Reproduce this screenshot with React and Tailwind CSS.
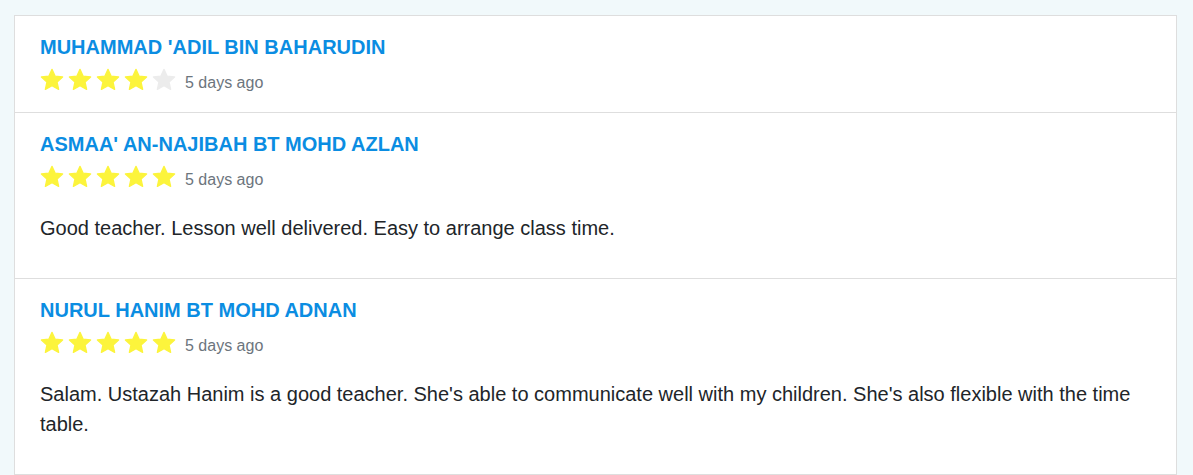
import React from "react";

const reviews = [
  { name: "MUHAMMAD 'ADIL BIN BAHARUDIN", stars: 4, when: "5 days ago", text: null },
  { name: "ASMAA' AN-NAJIBAH BT MOHD AZLAN", stars: 5, when: "5 days ago", text: "Good teacher. Lesson well delivered. Easy to arrange class time." },
  { name: "NURUL HANIM BT MOHD ADNAN", stars: 5, when: "5 days ago", text: "Salam. Ustazah Hanim is a good teacher. She's able to communicate well with my children. She's also flexible with the time table." },
];

function Star({ on }) {
  return (
    <svg width="26" height="26" viewBox="0 0 24 24" className="block">
      <path
        d="M12 2.2l2.95 6.3 6.85.75-5.1 4.65 1.43 6.8L12 17.2l-6.13 3.5 1.43-6.8-5.1-4.65 6.85-.75z"
        fill={on ? "#fcf43c" : "#ececec"}
        stroke={on ? "#fcf43c" : "#ececec"}
        strokeWidth="1.2"
        strokeLinejoin="round"
      />
    </svg>
  );
}

export default function App() {
  return (
    <div className="min-h-[475px] bg-[#f1f9fb] pt-[15px] pl-[14px] pr-[16px]" style={{ fontFamily: '"Liberation Sans", Arial, sans-serif' }}>
      <div className="bg-white border border-[#dedede] border-b-0">
        {reviews.map((r, i) => (
          <div key={i} className="px-[25px] pt-[19px] pb-[19px] border-b border-[#dedede]">
            <h3 className="text-[20px] leading-[24px] font-bold text-[#0b8de2] mb-[8px]">{r.name}</h3>
            <div className="flex items-start h-[26px]">
              <div className="flex gap-[2px] -ml-[1px]">
                {[0, 1, 2, 3, 4].map((k) => (
                  <Star key={k} on={k < r.stars} />
                ))}
              </div>
              <span className="ml-[8px] text-[16px] leading-[24px] pt-[4px] text-[#6c757d]">{r.when}</span>
            </div>
            {r.text && (
              <p className="mt-[23px] mb-[16px] text-[20px] leading-[30px] text-[#212529]">{r.text}</p>
            )}
          </div>
        ))}
      </div>
    </div>
  );
}
